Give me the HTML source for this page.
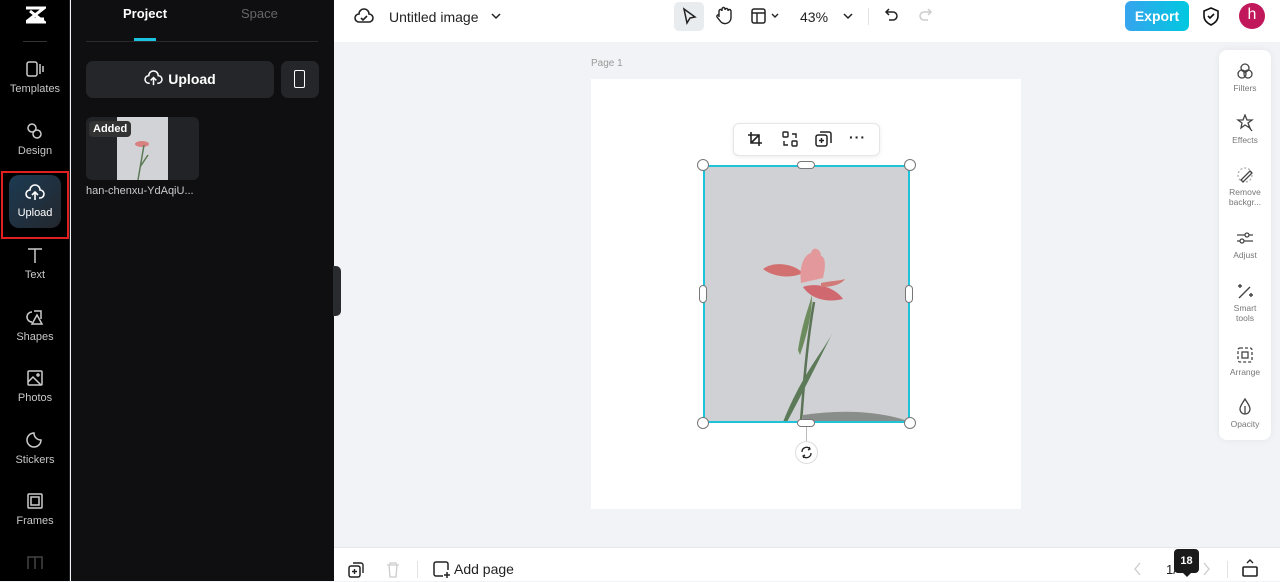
<!DOCTYPE html>
<html><head><meta charset="utf-8"><style>
*{box-sizing:border-box;margin:0;padding:0}
body{width:1280px;height:581px;overflow:hidden;font-family:"Liberation Sans",sans-serif;background:#f1f3f6;position:relative}
.abs{position:absolute}
.rail{left:0;top:0;width:70px;height:581px;background:#000;border-right:1px solid #222}
.ri{position:absolute;left:0;width:70px;text-align:center;color:#c8c8c8;font-size:11px}
.ri svg{display:block;margin:0 auto 5px}
.panel{left:71px;top:0;width:263px;height:581px;background:#0f0f11}
.top{left:334px;top:0;width:946px;height:42px;background:#fff}
.bot{left:334px;top:547px;width:946px;height:34px;background:#fff;border-top:1px solid #e6e8eb}
.rp{left:1219px;top:50px;width:52px;height:390px;background:#fff;border-radius:8px;box-shadow:0 0 8px rgba(0,0,0,.06)}
.rpi{position:absolute;left:0;width:52px;text-align:center;font-size:8.5px;color:#777;line-height:10px}
.rpi svg{display:block;margin:0 auto 3px}
.h{position:absolute;width:12px;height:12px;border-radius:50%;background:#fff;border:1px solid #777}
</style></head><body>
<div class="abs rail">
 <svg class="abs" style="left:24px;top:6px" width="22" height="18" viewBox="0 0 22 18"><path d="M2 2h18L6 13h14M2 16h18L6 5" stroke="#fff" stroke-width="3" fill="none"/></svg>
 <div class="abs" style="left:23px;top:41px;width:24px;height:1px;background:#333"></div>
 <div class="ri" style="top:60px"><svg width="20" height="18" viewBox="0 0 20 18" fill="none" stroke="#ccc" stroke-width="1.5"><rect x="2" y="2" width="10" height="14" rx="2"/><path d="M15 4v10M18 6v6"/></svg>Templates</div>
 <div class="ri" style="top:122px"><svg width="20" height="18" viewBox="0 0 20 18" fill="none" stroke="#ccc" stroke-width="1.5"><circle cx="7" cy="6" r="4"/><circle cx="12" cy="12" r="4"/></svg>Design</div>
 <div class="abs" style="left:1px;top:171px;width:68px;height:68px;border:2px solid #e02020"></div>
 <div class="abs" style="left:9px;top:175px;width:52px;height:53px;border-radius:10px;background:linear-gradient(135deg,#1d3a52,#23272d)"></div>
 <div class="ri" style="top:184px;color:#fff"><svg width="20" height="18" viewBox="0 0 20 18" fill="none" stroke="#fff" stroke-width="1.6"><path d="M6 14H5a4 4 0 0 1 0-8 5 5 0 0 1 10 0 4 4 0 0 1 0 8h-1M10 16V9M7 11l3-3 3 3"/></svg>Upload</div>
 <div class="ri" style="top:246px"><svg width="20" height="18" viewBox="0 0 20 18" fill="none" stroke="#ccc" stroke-width="1.5"><path d="M3 3h14M10 3v14"/></svg>Text</div>
 <div class="ri" style="top:308px"><svg width="20" height="18" viewBox="0 0 20 18" fill="none" stroke="#ccc" stroke-width="1.5"><path d="M7 4a5 5 0 1 0 0 10M9 3h7v8M12 7l-5 9h10z"/></svg>Shapes</div>
 <div class="ri" style="top:369px"><svg width="20" height="18" viewBox="0 0 20 18" fill="none" stroke="#ccc" stroke-width="1.5"><rect x="3" y="2" width="14" height="14" rx="1"/><path d="M3 13l5-5 8 8"/><circle cx="13" cy="6" r="1"/></svg>Photos</div>
 <div class="ri" style="top:431px"><svg width="20" height="18" viewBox="0 0 20 18" fill="none" stroke="#ccc" stroke-width="1.5"><path d="M16 9a7 7 0 1 1-7-7c0 4 3 7 7 7z"/></svg>Stickers</div>
 <div class="ri" style="top:492px"><svg width="20" height="18" viewBox="0 0 20 18" fill="none" stroke="#ccc" stroke-width="1.5"><rect x="3" y="2" width="14" height="14" rx="1"/><rect x="6" y="5" width="8" height="8"/></svg>Frames</div>
 <svg class="abs" style="left:26px;top:555px" width="18" height="14" viewBox="0 0 18 14" fill="none" stroke="#444" stroke-width="1.5"><path d="M2 14V2h14v12M9 2v12"/></svg>
</div>
<div class="abs panel">
 <div class="abs" style="left:52px;top:6px;color:#fff;font-weight:bold;font-size:13px">Project</div>
 <div class="abs" style="left:170px;top:6px;color:#666;font-size:13px">Space</div>
 <div class="abs" style="left:63px;top:38px;width:22px;height:3px;background:#1bc3e0"></div>
 <div class="abs" style="left:15px;top:41px;width:232px;height:1px;background:#2a2a2c"></div>
 <div class="abs" style="left:15px;top:61px;width:188px;height:37px;background:#25262a;border-radius:7px;color:#fff;font-weight:bold;font-size:14px;line-height:37px;text-align:center;padding-left:24px">Upload</div>
 <svg class="abs" style="left:73px;top:70px" width="19" height="17" viewBox="0 0 20 18" fill="none" stroke="#fff" stroke-width="1.6"><path d="M6 14H5a4 4 0 0 1 0-8 5 5 0 0 1 10 0 4 4 0 0 1 0 8h-1M10 16V9M7 11l3-3 3 3"/></svg>
 <div class="abs" style="left:210px;top:61px;width:38px;height:37px;background:#25262a;border-radius:7px"></div>
 <div class="abs" style="left:223px;top:70px;width:11px;height:18px;border:1.6px solid #fff;border-radius:2px"></div>
 <div class="abs" style="left:15px;top:117px;width:113px;height:63px;background:#222327;border-radius:6px;overflow:hidden">
  <div class="abs" style="left:31px;top:0;width:51px;height:63px;background:#d2d3d6"></div>
  <div class="abs" style="left:49px;top:24px;width:14px;height:6px;background:#d98080;border-radius:50%"></div>
  <svg class="abs" style="left:44px;top:28px" width="20" height="35"><path d="M14 0L8 35M10 22l8-12" stroke="#5c7a58" stroke-width="1.5" fill="none"/></svg>
  <div class="abs" style="left:3px;top:4px;background:#333;color:#fff;font-size:11px;font-weight:bold;padding:2px 4px;border-radius:4px">Added</div>
 </div>
 <div class="abs" style="left:15px;top:185px;color:#ccc;font-size:11px">han-chenxu-YdAqiU...</div>
</div>
<div class="abs" style="left:333px;top:266px;width:8px;height:50px;background:#2a2b2e;border-radius:0 5px 5px 0"></div>
<div class="abs top">
 <svg class="abs" style="left:20px;top:7px" width="20" height="18" viewBox="0 0 20 18" fill="none" stroke="#222" stroke-width="1.6"><path d="M5 15a4 4 0 0 1 0-8 5 5 0 0 1 10 0 4 4 0 0 1 0 8z"/><path d="M7 11l2 2 4-4"/></svg>
 <div class="abs" style="left:55px;top:9px;font-size:14px;color:#222">Untitled image</div>
 <svg class="abs" style="left:157px;top:12px" width="10" height="8"><path d="M1 2l4 4 4-4" stroke="#222" stroke-width="1.5" fill="none"/></svg>
 <div class="abs" style="left:340px;top:2px;width:30px;height:29px;background:#e9ecef;border-radius:5px"></div>
 <svg class="abs" style="left:347px;top:7px" width="16" height="18"><path d="M3 2l11 8-5 1-3 5z" stroke="#222" stroke-width="1.5" fill="none"/></svg>
 <svg class="abs" style="left:380px;top:6px" width="18" height="20"><path d="M5 11V5a1.5 1.5 0 0 1 3 0V3a1.5 1.5 0 0 1 3 0v1a1.5 1.5 0 0 1 3 0v1a1.5 1.5 0 0 1 3 0v7a6 6 0 0 1-10 4l-4-5a1.5 1.5 0 0 1 2-2z" stroke="#222" stroke-width="1.4" fill="none"/></svg>
 <svg class="abs" style="left:417px;top:8px" width="34" height="16"><rect x="1" y="1" width="13" height="14" rx="2" stroke="#222" stroke-width="1.5" fill="none"/><path d="M1 5h13M6 5v10M21 6l3 3 3-3" stroke="#222" stroke-width="1.4" fill="none"/></svg>
 <div class="abs" style="left:466px;top:9px;font-size:14px;color:#222">43%</div>
 <svg class="abs" style="left:509px;top:12px" width="10" height="8"><path d="M1 2l4 4 4-4" stroke="#222" stroke-width="1.5" fill="none"/></svg>
 <div class="abs" style="left:534px;top:8px;width:1px;height:17px;background:#e3e3e3"></div>
 <svg class="abs" style="left:550px;top:7px" width="16" height="18"><path d="M5 2L2 5l3 3M2 5h7a4 4 0 0 1 0 8H5" stroke="#222" stroke-width="1.5" fill="none"/></svg>
 <svg class="abs" style="left:583px;top:7px" width="16" height="18"><path d="M11 2l3 3-3 3M14 5H7a4 4 0 0 0 0 8h4" stroke="#ccc" stroke-width="1.5" fill="none"/></svg>
 <div class="abs" style="left:791px;top:1px;width:64px;height:30px;border-radius:6px;background:linear-gradient(90deg,#36a4ee,#00c8e0);color:#fff;font-weight:bold;font-size:14px;line-height:30px;text-align:center">Export</div>
 <svg class="abs" style="left:868px;top:7px" width="18" height="19"><path d="M9 1l7 3v5c0 4-3 7-7 9-4-2-7-5-7-9V4z" stroke="#111" stroke-width="1.6" fill="none"/><path d="M6 9l2 2 4-4" stroke="#111" stroke-width="1.6" fill="none"/></svg>
 <div class="abs" style="left:905px;top:3px;width:26px;height:26px;border-radius:50%;background:#c0185a;color:#fff;font-size:16px;line-height:24px;text-align:center">h</div>
</div>
<div class="abs" style="left:591px;top:58px;font-size:10px;color:#999">Page 1</div>
<div class="abs" style="left:591px;top:79px;width:430px;height:430px;background:#fff"></div>
<div class="abs" style="left:703px;top:165px;width:207px;height:258px;background:#d0d1d4;overflow:hidden">
 <svg width="207" height="258"><path d="M98 257c3-40 6-80 13-120" stroke="#5b7356" stroke-width="2.5" fill="none"/><path d="M80 257c20-50 40-70 50-90-15 30-30 60-46 90z" fill="#5d7a58"/><path d="M95 185c5-30 10-40 14-55 0 20-5 40-12 60z" fill="#6d8c5e"/><path d="M100 250c40-6 80-4 110 8H100z" fill="#8a8e8a"/><path d="M60 104c10-8 30-6 40 4-12 6-30 4-40-4z" fill="#d27070"/><path d="M98 118c-2-14 2-28 10-30 2-8 10-4 10 3 3 0 6 6 2 22z" fill="#e3999c"/><path d="M100 122c10-4 30-2 40 12-16 4-32 0-40-12z" fill="#d06870"/><path d="M118 118c8-2 18-2 24-4-4 6-14 8-24 8z" fill="#d27a78"/></svg>
</div>
<div class="abs" style="left:703px;top:165px;width:207px;height:258px;border:2px solid #1ec2d9"></div>
<div class="h" style="left:697px;top:159px"></div><div class="h" style="left:904px;top:159px"></div>
<div class="h" style="left:697px;top:417px"></div><div class="h" style="left:904px;top:417px"></div>
<div class="abs" style="left:797px;top:161px;width:18px;height:8px;border-radius:4px;background:#fff;border:1px solid #777"></div>
<div class="abs" style="left:797px;top:419px;width:18px;height:8px;border-radius:4px;background:#fff;border:1px solid #777"></div>
<div class="abs" style="left:699px;top:285px;width:8px;height:18px;border-radius:4px;background:#fff;border:1px solid #777"></div>
<div class="abs" style="left:905px;top:285px;width:8px;height:18px;border-radius:4px;background:#fff;border:1px solid #777"></div>
<div class="abs" style="left:806px;top:427px;width:1px;height:15px;background:#bbb"></div>
<div class="abs" style="left:795px;top:441px;width:23px;height:23px;border-radius:50%;background:#fff;border:1px solid #ddd"></div>
<svg class="abs" style="left:800px;top:446px" width="13" height="13"><path d="M2 6a4.5 4.5 0 0 1 8-3M11 7a4.5 4.5 0 0 1-8 3M9 1l1 2-2 1M4 12l-1-2 2-1" stroke="#222" stroke-width="1.3" fill="none"/></svg>
<div class="abs" style="left:733px;top:123px;width:147px;height:33px;background:#fff;border-radius:6px;border:1px solid #e6e6e6;box-shadow:0 1px 4px rgba(0,0,0,.08)"></div>
<svg class="abs" style="left:747px;top:131px" width="17" height="17"><path d="M4 1v11h11M1 4h11v11M4 12l8-8" stroke="#222" stroke-width="1.6" fill="none"/></svg>
<svg class="abs" style="left:782px;top:131px" width="17" height="17"><rect x="1" y="1" width="5" height="5" rx="1" stroke="#222" stroke-width="1.4" fill="none"/><rect x="10" y="10" width="5" height="5" rx="1" stroke="#222" stroke-width="1.4" fill="none"/><path d="M10 3h4v4M6 14H2v-4" stroke="#222" stroke-width="1.4" fill="none"/></svg>
<svg class="abs" style="left:815px;top:131px" width="17" height="17"><rect x="1" y="4" width="11" height="11" rx="2" stroke="#222" stroke-width="1.5" fill="none"/><path d="M5 1h9a2 2 0 0 1 2 2v9M6.5 7v5M4 9.5h5" stroke="#222" stroke-width="1.5" fill="none"/></svg>
<div class="abs" style="left:849px;top:129px;font-size:14px;font-weight:bold;color:#222;letter-spacing:1px">···</div>
<div class="abs rp">
 <div class="rpi" style="top:12px"><svg width="18" height="18" fill="none" stroke="#444" stroke-width="1.3"><circle cx="9" cy="6" r="4"/><circle cx="6" cy="12" r="4"/><circle cx="12" cy="12" r="4"/></svg>Filters</div>
 <div class="rpi" style="top:64px"><svg width="18" height="18" fill="none" stroke="#444" stroke-width="1.3"><path d="M9 1l2 5 5 0-4 3 2 5-5-3-4 3 1-5-4-3h5z"/><path d="M12 12l4 5"/></svg>Effects</div>
 <div class="rpi" style="top:116px"><svg width="18" height="18" fill="none" stroke="#444" stroke-width="1.3"><circle cx="9" cy="9" r="7" stroke-dasharray="2 2" stroke="#aaa"/><path d="M5 14l9-9 2 2-9 9z"/></svg>Remove<br>backgr...</div>
 <div class="rpi" style="top:179px"><svg width="18" height="18" fill="none" stroke="#444" stroke-width="1.3"><path d="M1 6h16M1 12h16"/><circle cx="11" cy="6" r="2" fill="#fff"/><circle cx="6" cy="12" r="2" fill="#fff"/></svg>Adjust</div>
 <div class="rpi" style="top:232px"><svg width="18" height="18" fill="none" stroke="#444" stroke-width="1.4"><path d="M3 16L14 5M4 2v4M2 4h4M15 11v4M13 13h4"/></svg>Smart<br>tools</div>
 <div class="rpi" style="top:296px"><svg width="18" height="18" fill="none" stroke="#444" stroke-width="1.3"><rect x="2" y="2" width="14" height="14" rx="2" stroke-dasharray="3 2"/><rect x="6" y="6" width="6" height="6"/></svg>Arrange</div>
 <div class="rpi" style="top:348px"><svg width="18" height="18" fill="none" stroke="#444" stroke-width="1.3"><path d="M9 1c3 5 5 7 5 10a5 5 0 0 1-10 0c0-3 2-5 5-10z"/><path d="M9 8v8" /></svg>Opacity</div>
</div>
<div class="abs bot">
 <svg class="abs" style="left:14px;top:14px" width="16" height="16"><rect x="1" y="4" width="11" height="11" rx="2" stroke="#222" stroke-width="1.5" fill="none"/><path d="M5 1h8a2 2 0 0 1 2 2v8M6.5 7v5M4 9.5h5" stroke="#222" stroke-width="1.4" fill="none"/></svg>
 <svg class="abs" style="left:52px;top:14px" width="14" height="16"><path d="M1 3h12M4 3V1h6v2M3 3l1 12h6l1-12" stroke="#ccc" stroke-width="1.3" fill="none"/></svg>
 <div class="abs" style="left:83px;top:13px;width:1px;height:17px;background:#e3e3e3"></div>
 <svg class="abs" style="left:99px;top:13px" width="17" height="17"><path d="M10 15H3a2 2 0 0 1-2-2V3a2 2 0 0 1 2-2h10a2 2 0 0 1 2 2v6M14 11v6M11 14h6" stroke="#222" stroke-width="1.5" fill="none"/></svg>
 <div class="abs" style="left:120px;top:13px;font-size:14px;color:#222">Add page</div>
 <svg class="abs" style="left:800px;top:14px" width="8" height="14"><path d="M6 1L1 7l5 6" stroke="#ccc" stroke-width="1.3" fill="none"/></svg>
 <div class="abs" style="left:832px;top:14px;font-size:13px;color:#222">1/</div>
 <div class="abs" style="left:840px;top:1px;width:25px;height:24px;background:#1a1a1a;border-radius:4px;color:#fff;font-size:11px;font-weight:bold;text-align:center;line-height:24px">18</div>
 <div class="abs" style="left:848px;top:24px;width:0;height:0;border:5px solid transparent;border-top-color:#1a1a1a"></div>
 <svg class="abs" style="left:868px;top:14px" width="8" height="14"><path d="M2 1l5 6-5 6" stroke="#ccc" stroke-width="1.3" fill="none"/></svg>
 <div class="abs" style="left:893px;top:13px;width:1px;height:17px;background:#e3e3e3"></div>
 <svg class="abs" style="left:908px;top:11px" width="16" height="18"><path d="M5 4l3-3 3 3" stroke="#222" stroke-width="1.4" fill="none"/><rect x="1" y="8" width="14" height="9" rx="1" stroke="#222" stroke-width="1.6" fill="none"/></svg>
</div>
</body></html>
